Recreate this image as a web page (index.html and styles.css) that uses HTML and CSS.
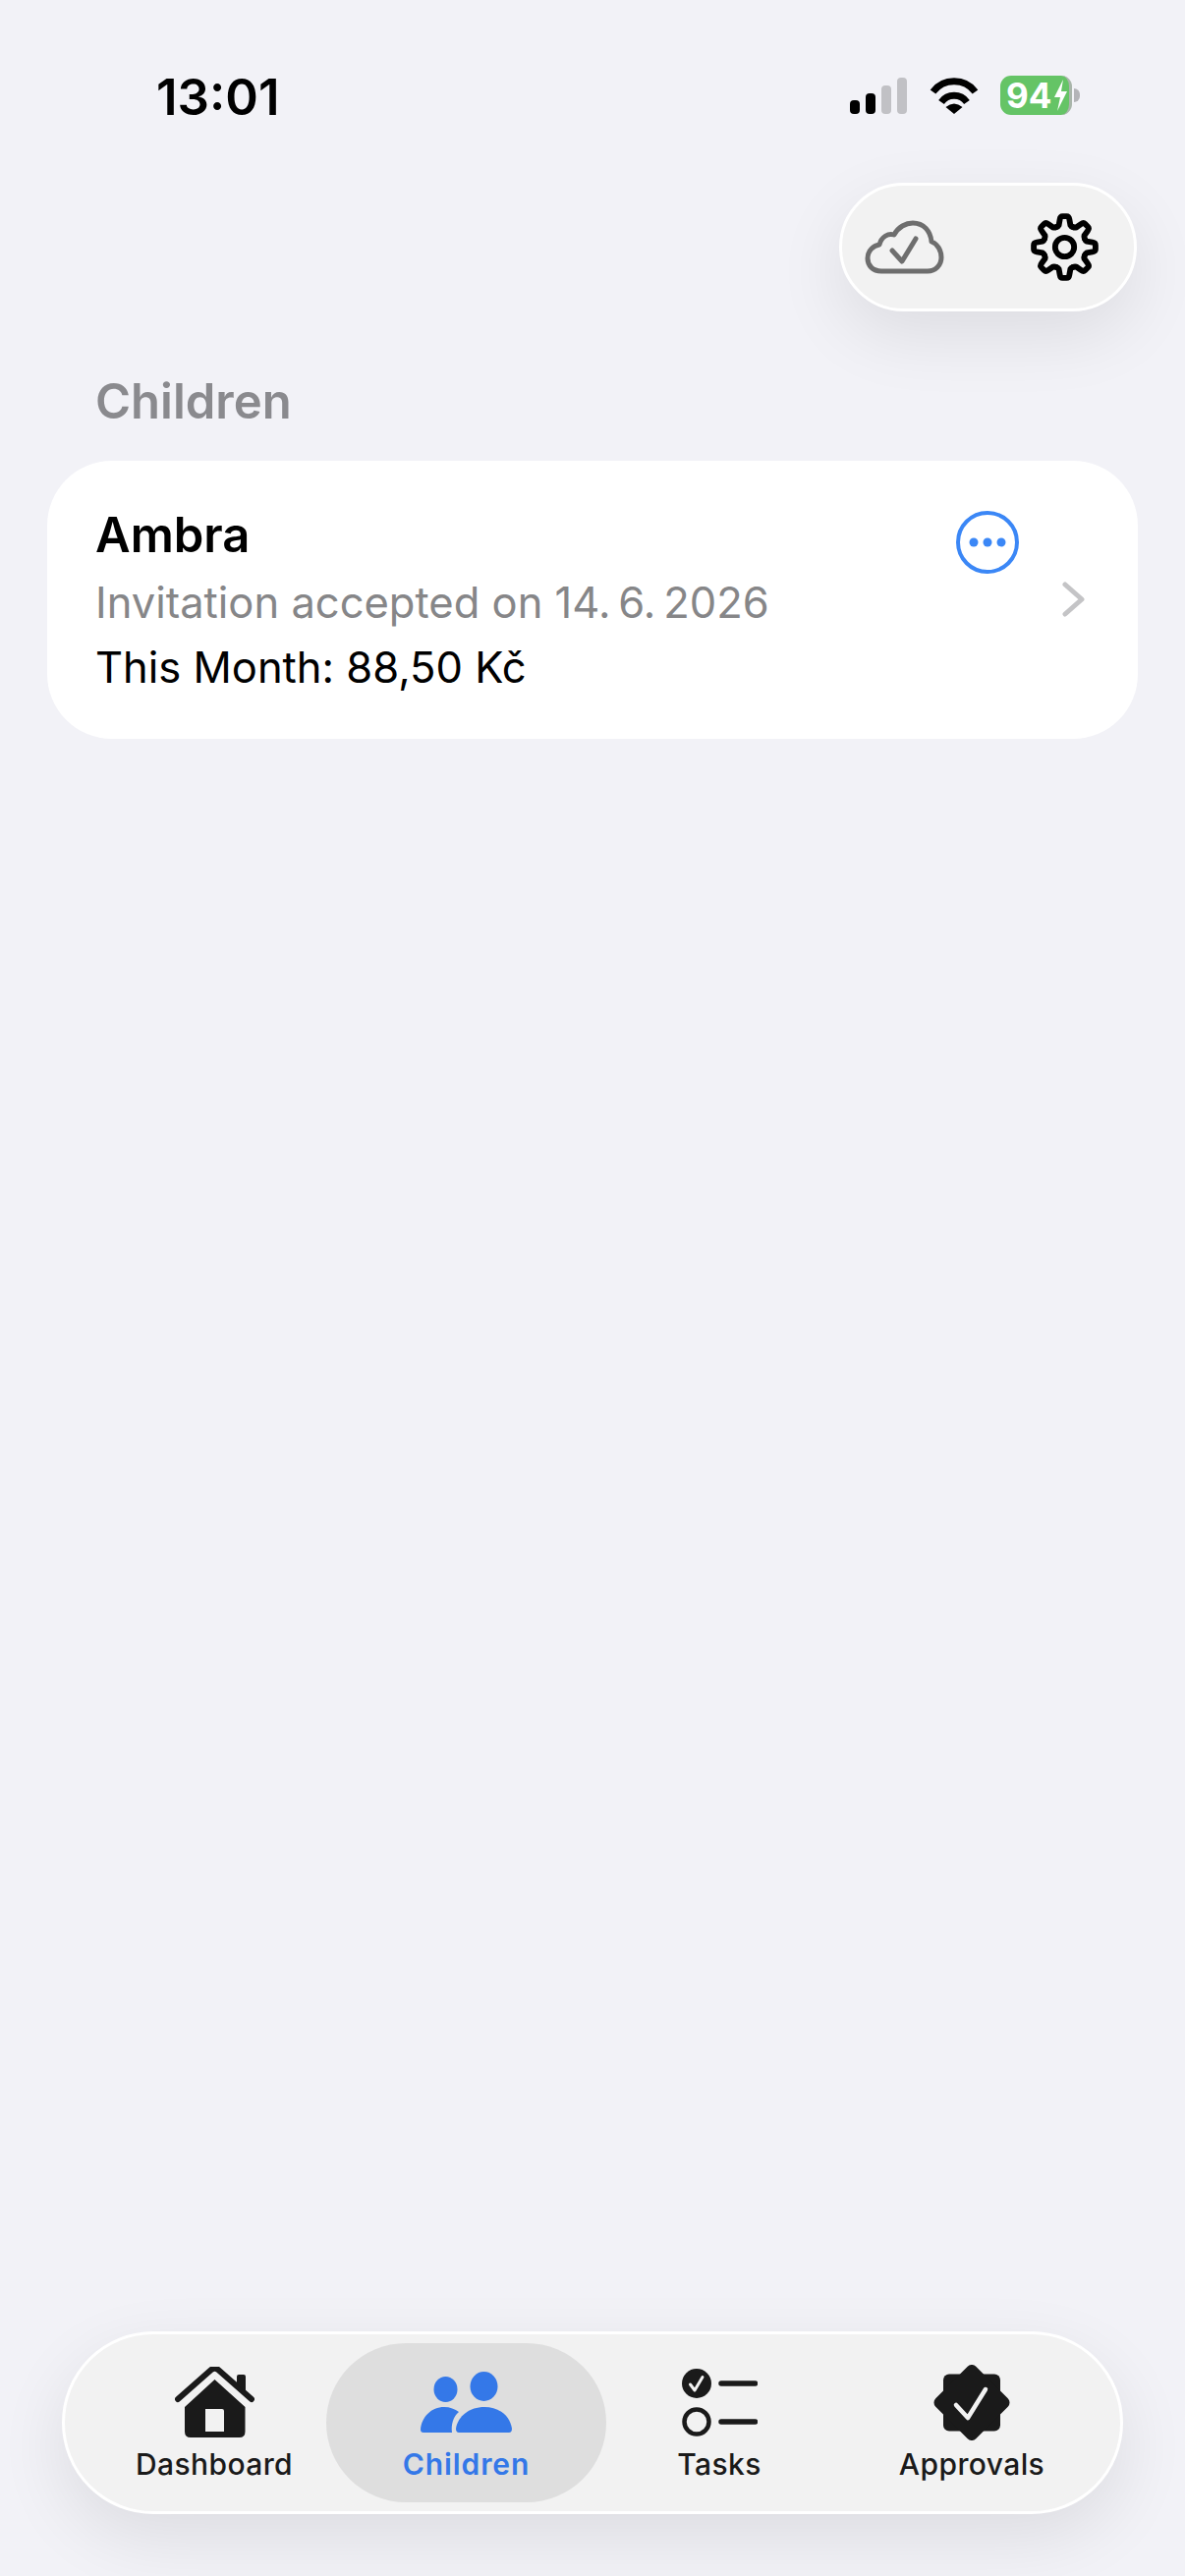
FILE: index.html
```html
<!DOCTYPE html>
<html lang="en">
<head>
  <meta charset="UTF-8">
  <meta name="viewport" content="width=device-width, initial-scale=1.0">
  <title>Children</title>
  <link rel="stylesheet" href="styles.css">
</head>
<body>
  <div class="screen">
    <!-- Status bar -->
    <div class="status-bar">
      <span class="time">13:01</span>
      <div class="status-icons">
        <svg class="signal" viewBox="0 0 58 37">
          <rect x="0" y="23" width="10" height="14" rx="4" fill="#000"/>
          <rect x="16" y="16" width="10" height="21" rx="4" fill="#000"/>
          <rect x="32" y="8" width="10" height="29" rx="4" fill="#c1c1c5"/>
          <rect x="48" y="0" width="10" height="37" rx="4" fill="#c1c1c5"/>
        </svg>
        <svg class="wifi" viewBox="0 0 50 37">
          <path d="M3.500 14.500 A27 27 0 0 1 46.500 14.500" fill="none" stroke="#000" stroke-width="7"/>
          <path d="M12 25 A16 16 0 0 1 38 25" fill="none" stroke="#000" stroke-width="7"/>
          <path d="M25 37 L16.500 30 Q25 23 33.500 30 Z" fill="#000"/>
        </svg>
        <div class="battery">
          <span class="battery-level">94</span>
          <svg class="bolt" viewBox="0 0 13 32">
            <path d="M9 0 L0 18 L6 18 L3 32 L13 12 L7 12 Z" fill="#fff"/>
          </svg>
          <span class="battery-nub"></span>
        </div>
      </div>
    </div>

    <!-- Top toolbar -->
    <div class="toolbar">
      <svg class="cloud-icon" viewBox="0 0 81 55">
        <path d="M17 52 C8 52 3 46 3 39 C3 31 9 26 15 25 C17 17 24 13 30 15 C34 7 42 3 49 3 C60 3 67 11 68 22 C74 24 78 31 78 38 C78 46 72 52 64 52 Z" fill="none" stroke="#6e6e6e" stroke-width="5" stroke-linejoin="round"/>
        <path d="M28 31 L38 42 L52 19" fill="none" stroke="#6e6e6e" stroke-width="5" stroke-linecap="round" stroke-linejoin="round"/>
      </svg>
      <svg class="gear-icon" viewBox="0 0 100 100">
        <g fill="none" stroke="#000" stroke-width="8.5" stroke-linecap="round" stroke-linejoin="round">
          <g id="tooth">
            <path d="M37.8 20.4 Q40.5 19.5 41.5 17.5 L43 9 Q43.7 4.5 47 4.5 L53 4.5 Q56.3 4.5 57 9 L58.5 17.5 Q59.5 19.5 62.2 20.4"/>
          </g>
          <use href="#tooth" transform="rotate(45 50 50)"/>
          <use href="#tooth" transform="rotate(90 50 50)"/>
          <use href="#tooth" transform="rotate(135 50 50)"/>
          <use href="#tooth" transform="rotate(180 50 50)"/>
          <use href="#tooth" transform="rotate(225 50 50)"/>
          <use href="#tooth" transform="rotate(270 50 50)"/>
          <use href="#tooth" transform="rotate(315 50 50)"/>
          <circle cx="50" cy="50" r="14"/>
        </g>
      </svg>
    </div>

    <h2 class="section-title">Children</h2>

    <!-- Child card -->
    <div class="child-card">
      <div class="child-info">
        <div class="child-name">Ambra</div>
        <div class="child-status">Invitation accepted on 14.&thinsp;6.&thinsp;2026</div>
        <div class="child-total">This Month: 88,50 Kč</div>
      </div>
      <svg class="more-icon" viewBox="0 0 64 64">
        <circle cx="32" cy="32" r="30" fill="none" stroke="#3b87f6" stroke-width="4"/>
        <circle cx="18" cy="32" r="4.5" fill="#3b87f6"/>
        <circle cx="32" cy="32" r="4.5" fill="#3b87f6"/>
        <circle cx="46" cy="32" r="4.5" fill="#3b87f6"/>
      </svg>
      <svg class="chevron" viewBox="0 0 23 36">
        <path d="M3 3 L20 18 L3 33" fill="none" stroke="#c4c4c6" stroke-width="5" stroke-linecap="round" stroke-linejoin="round"/>
      </svg>
    </div>

    <!-- Tab bar -->
    <nav class="tab-bar">
      <div class="tab">
        <svg class="tab-icon home-icon" viewBox="0 0 81 72">
          <path d="M40.500 13 L71.500 41 L71.500 66 Q71.500 72 65.500 72 L16 72 Q10 72 10 66 L10 41 Z M31 43 L31 66 L50 66 L50 45 Q50 43 48 43 Z" fill="#1a1a1a" fill-rule="evenodd"/>
          <path d="M3 33 L37 3 Q40.500 0.500 44 3 L78 33" fill="none" stroke="#1a1a1a" stroke-width="6" stroke-linecap="round" stroke-linejoin="round"/>
          <path d="M63 18 L63 10 Q63 8 65 8 L70 8 Q72 8 72 10 L72 26 Z" fill="#1a1a1a"/>
        </svg>
        <span class="tab-label">Dashboard</span>
      </div>
      <div class="tab active">
        <svg class="tab-icon children-icon" viewBox="0 0 93 62">
          <ellipse cx="25.500" cy="18" rx="12" ry="13" fill="#3478e8"/>
          <ellipse cx="64.500" cy="15" rx="14" ry="15" fill="#3478e8"/>
          <path d="M3 62 Q0 62 0 59 C1 46 11 36 24 36 C30 36 35 38 39 41 C33 46 31 54 32 62 Z" fill="#3478e8"/>
          <path d="M39 62 Q36 62 36 58 C38 45 50 36 65 36 C80 36 91 45 93 58 Q93 62 90 62 Z" fill="#3478e8"/>
        </svg>
        <span class="tab-label">Children</span>
      </div>
      <div class="tab">
        <svg class="tab-icon tasks-icon" viewBox="0 0 77 69">
          <circle cx="15" cy="15" r="15" fill="#1a1a1a"/>
          <path d="M8.500 16 L13 22 L21 8.500" fill="none" stroke="#f2f2f2" stroke-width="3" stroke-linecap="round" stroke-linejoin="round"/>
          <circle cx="15" cy="54" r="12.500" fill="none" stroke="#1a1a1a" stroke-width="4.500"/>
          <path d="M40 15 L74.500 15 M40 54 L74.500 54" stroke="#1a1a1a" stroke-width="5.500" stroke-linecap="round"/>
        </svg>
        <span class="tab-label">Tasks</span>
      </div>
      <div class="tab">
        <svg class="tab-icon badge-icon" viewBox="0 0 78 77">
          <rect x="10" y="9.500" width="58" height="58" rx="6" fill="#1a1a1a"/>
          <rect x="10" y="9.500" width="58" height="58" rx="6" fill="#1a1a1a" transform="rotate(45 39 38.500)"/>
          <path d="M23 41 L35 54 L53 25" fill="none" stroke="#f2f2f2" stroke-width="4.500" stroke-linecap="round" stroke-linejoin="round"/>
        </svg>
        <span class="tab-label">Approvals</span>
      </div>
    </nav>
  </div>
</body>
</html>
```

FILE: styles.css
```css
* {
  box-sizing: border-box;
}

html,
body {
  margin: 0;
  padding: 0;
}

body {
  background-color: #f2f2f7;
  font-family: "Inter", "Liberation Sans", sans-serif;
}

.screen {
  display: flex;
  flex-direction: column;
  height: 2622px;
  overflow: hidden;
}

/* Status bar */
.status-bar {
  display: flex;
  align-items: center;
  justify-content: space-between;
  height: 40px;
  margin-top: 77px;
  padding: 0 115px 0 159px;
}

.time {
  margin-top: 3px;
  font-size: 51px;
  font-weight: 600;
  line-height: 40px;
  color: #000;
}

.status-icons {
  display: flex;
  align-items: center;
}

.signal {
  width: 58px;
  height: 37px;
}

.wifi {
  width: 50px;
  height: 37px;
  margin-left: 23px;
}

.battery {
  position: relative;
  display: flex;
  align-items: center;
  width: 73px;
  height: 40px;
  margin-left: 22px;
  padding-left: 6px;
  background-color: #65c466;
  border-right: 3px solid #a9b5aa;
  border-radius: 11px;
}

.battery-level {
  font-size: 35px;
  font-weight: 700;
  line-height: 40px;
  color: #fff;
}

.bolt {
  width: 13px;
  height: 32px;
  margin-left: 3px;
}

.battery-nub {
  position: absolute;
  top: 13px;
  right: -11px;
  width: 6px;
  height: 14px;
  background-color: #b4b4b8;
  border-radius: 0 7px 7px 0;
}

/* Toolbar */
.toolbar {
  display: flex;
  align-items: center;
  justify-content: space-between;
  align-self: flex-end;
  width: 303px;
  height: 131px;
  margin-top: 69px;
  margin-right: 49px;
  padding: 0 36px 0 23px;
  background-color: #f2f2f2;
  border: 3px solid #fff;
  border-radius: 66px;
  box-shadow: 0 24px 70px rgba(0, 0, 0, 0.09);
}

.cloud-icon {
  width: 81px;
  height: 55px;
}

.gear-icon {
  width: 69px;
  height: 69px;
}

.section-title {
  margin: 0;
  padding: 61px 0 0 97px;
  font-size: 49px;
  font-weight: 600;
  line-height: 62px;
  color: #8a8a8e;
}

/* Card */
.child-card {
  position: relative;
  height: 283px;
  margin: 29px 48px 0;
  padding: 46px 49px;
  background-color: #fff;
  border-radius: 66px;
}

.child-name {
  font-size: 49px;
  font-weight: 600;
  line-height: 60px;
  color: #000;
}

.child-status {
  margin-top: 10px;
  font-size: 43.5px;
  line-height: 56px;
  color: #868688;
}

.child-total {
  margin-top: 10px;
  font-size: 43.5px;
  line-height: 56px;
  color: #000;
}

.more-icon {
  position: absolute;
  top: 51px;
  right: 121px;
  width: 64px;
  height: 64px;
}

.chevron {
  position: absolute;
  top: 123px;
  right: 54px;
  width: 23px;
  height: 36px;
}

/* Tab bar */
.tab-bar {
  display: grid;
  grid-template-columns: 228px 285px 230px 284px;
  align-items: center;
  height: 186px;
  margin: auto 63px 63px;
  padding: 9px 0 9px 38px;
  background-color: #f2f2f2;
  border: 3px solid #fff;
  border-radius: 93px;
  box-shadow: 0 24px 70px rgba(0, 0, 0, 0.09);
}

.tab {
  display: flex;
  flex-direction: column;
  align-items: center;
  justify-content: flex-end;
  height: 162px;
  padding-bottom: 21px;
  border-radius: 81px;
  color: #1a1a1a;
}

.tab.active {
  background-color: #dedede;
  color: #3478e8;
}

.tab-icon {
  display: block;
}

.home-icon {
  width: 81px;
  height: 72px;
  margin-bottom: 9px;
}

.children-icon {
  width: 93px;
  height: 62px;
  margin-bottom: 14px;
}

.tasks-icon {
  width: 77px;
  height: 69px;
  margin-bottom: 10px;
}

.badge-icon {
  width: 78px;
  height: 77px;
  margin-bottom: 6px;
}

.tab-label {
  font-size: 30px;
  font-weight: 500;
  letter-spacing: 0.4px;
  line-height: 36px;
}

.tab.active .tab-label {
  font-weight: 600;
  letter-spacing: 0.9px;
}
```
